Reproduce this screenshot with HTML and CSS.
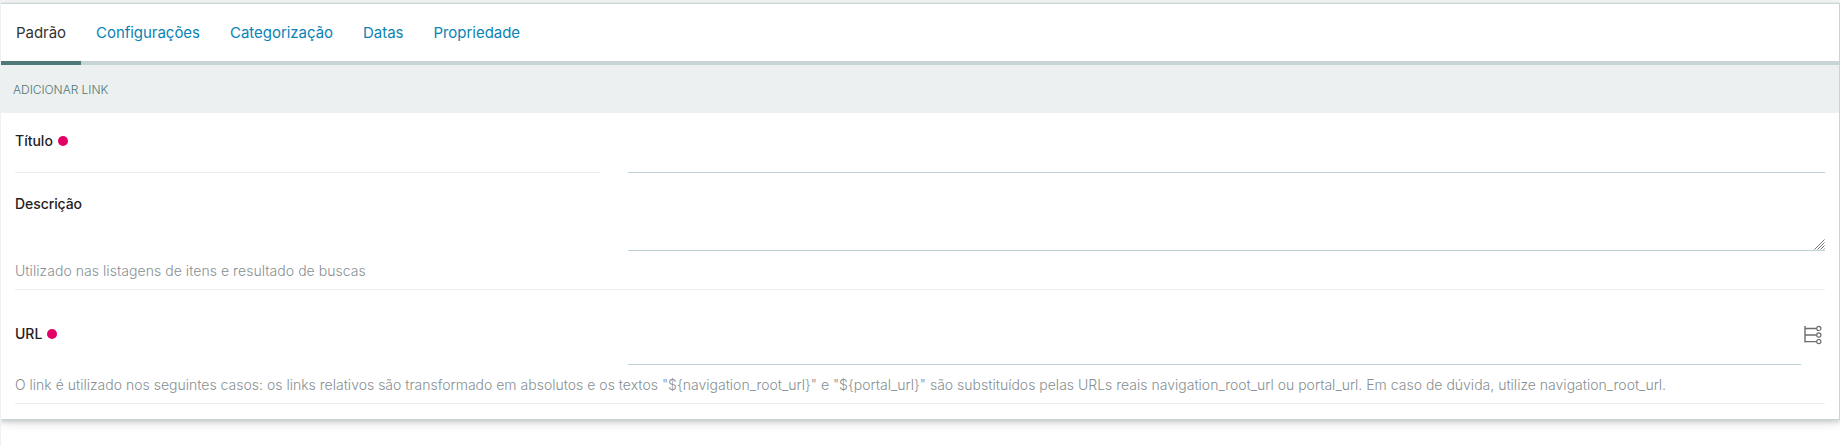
FILE: index.html
```html
<!DOCTYPE html>
<html lang="pt-BR">
<head>
<meta charset="utf-8">
<title>Adicionar Link</title>
<link rel="stylesheet" href="styles.css">
</head>
<body>
<form class="panel">
  <nav class="tabs">
    <a class="tab active">Padrão</a>
    <a class="tab">Configurações</a>
    <a class="tab">Categorização</a>
    <a class="tab">Datas</a>
    <a class="tab">Propriedade</a>
  </nav>
  <header class="heading">ADICIONAR LINK</header>
  <div class="fields">
    <div class="field title-field">
      <div class="label-cell"><label for="title">Título</label><span class="required"></span></div>
      <input id="title" class="control" type="text">
    </div>
    <div class="field description-field">
      <div class="label-cell"><label for="description">Descrição</label></div>
      <div class="textarea-wrap">
        <textarea id="description" class="control"></textarea>
        <svg class="grip" width="11" height="11" viewBox="0 0 11 11" fill="none" stroke="#777">
          <path d="M.5 10.5l10-10M3.5 10.5l7-7M6.5 10.5l4-4M9.5 10.5l1-1"/>
        </svg>
      </div>
      <p class="help short">Utilizado nas listagens de itens e resultado de buscas</p>
    </div>
    <div class="field url-field">
      <div class="label-cell"><label for="url">URL</label><span class="required"></span></div>
      <div class="with-button">
        <input id="url" class="control" type="text">
        <svg class="tree-icon" width="18" height="20" viewBox="0 0 18 20" fill="none" stroke="#6b6d6f">
          <path d="M1 1v16.5M1 3.5h11.5M1 10h11.5M1 16.6h11.5" stroke-width="1.4"/>
          <circle cx="14.8" cy="3.4" r="2.1" stroke-width="1.2"/>
          <circle cx="14.8" cy="10" r="2.1" stroke-width="1.2"/>
          <circle cx="14.8" cy="16.6" r="2.1" stroke-width="1.2"/>
        </svg>
      </div>
      <p class="help">O link é utilizado nos seguintes casos: os links relativos são transformado em absolutos e os textos "${navigation_root_url}" e "${portal_url}" são substituídos pelas URLs reais navigation_root_url ou portal_url. Em caso de dúvida, utilize navigation_root_url.</p>
    </div>
  </div>
</form>
</body>
</html>
```
FILE: styles.css
```css
* { box-sizing: border-box; }
body {
  margin: 0;
  padding-top: 3px;
  height: 446px;
  overflow: hidden;
  background: linear-gradient(#f7f8f8, #f7f8f8) 0 0 / 100% 3px no-repeat, #fff;
  border-left: 1px solid #edf1f2;
  font-family: Inter, sans-serif;
  font-size: 14px;
  color: #1f2223;
}
.panel {
  height: 417px;
  margin-left: -1px;
  background: #fff;
  border: 1px solid #c7d5d8;
  box-shadow: 0 2px 4px rgba(34, 36, 38, .14), 0 2px 10px rgba(34, 36, 38, .16);
}
.tabs {
  display: flex;
  height: 61px;
  border-bottom: 4px solid #c7d5d8;
}
.tab {
  height: 61px;
  padding: 0 15px;
  line-height: 57px;
  font-size: 15px;
  font-weight: 400;
  letter-spacing: -.03px;
  color: #0a83b5;
  border-bottom: 4px solid transparent;
}
.tab.active { width: 80px; color: #333; border-bottom-color: #4f7876; }
.heading {
  height: 48px;
  padding-left: 12px;
  line-height: 49px;
  font-size: 12px;
  font-weight: 300;
  letter-spacing: -.04px;
  color: #4f7876;
  background: #ecf0f1;
}
.fields { padding: 0 14px; }
.field {
  display: grid;
  grid-template-columns: 585px 1fr;
  column-gap: 28px;
}
.title-field { grid-template-rows: 60px; }
.description-field {
  grid-template-rows: 78px 38px;
  border-bottom: 1px solid #ecefef;
}
.url-field {
  grid-template-rows: 75px 38px;
  border-bottom: 1px solid #ecefef;
}
.label-cell {
  display: flex;
  align-items: flex-start;
  padding-top: 18px;
  line-height: 20px;
  font-weight: 500;
}
.title-field .label-cell { border-bottom: 1px solid #ecefef; }
.description-field .label-cell { padding-top: 21px; letter-spacing: -.08px; }
.url-field .label-cell { padding-top: 34px; }
.required {
  width: 10px;
  height: 10px;
  margin: 5px 0 0 5px;
  border-radius: 50%;
  background: #e40166;
}
.control {
  display: block;
  width: 100%;
  height: 100%;
  padding: 0;
  border: 0;
  border-bottom: 1px solid #bdd2d6;
  border-radius: 0;
  outline: 0;
  background: transparent;
  font: inherit;
}
textarea.control { resize: none; }
.textarea-wrap { position: relative; }
.grip {
  position: absolute;
  right: 0;
  bottom: 1px;
}
.with-button { display: flex; justify-content: space-between; }
.with-button .control { width: 1173px; }
.tree-icon { margin: 35px 3px 0 0; }
.help {
  grid-column: 1 / -1;
  margin: 0;
  padding-top: 10px;
  line-height: 20px;
  font-weight: 300;
  letter-spacing: .005px;
  color: #878f93;
  white-space: nowrap;
}
.help.short { letter-spacing: .05px; }
```
